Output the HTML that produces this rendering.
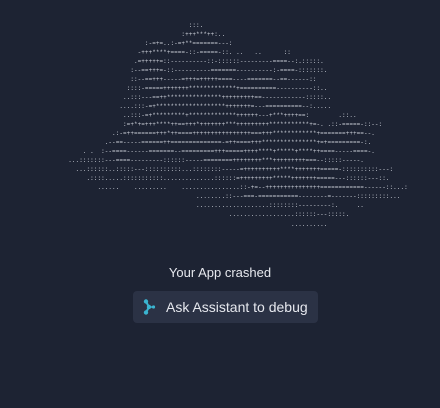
<!DOCTYPE html>
<html><head><meta charset="utf-8"><style>
html,body{margin:0;padding:0;background:#1d2333;width:440px;height:408px;overflow:hidden}
pre{position:absolute;left:50px;top:20.5px;margin:0;font-family:"Liberation Mono",monospace;font-size:6px;line-height:9.05px;color:#cdd1da;letter-spacing:0.05px}
.t{position:absolute;left:0;width:440px;top:265px;text-align:center;font-family:"Liberation Sans",sans-serif;font-size:13px;color:#e6e8ee}
.b{position:absolute;left:133px;top:291px;width:185px;height:32px;background:#2b3245;border-radius:4px;font-family:"Liberation Sans",sans-serif;font-size:14px;color:#e6e8ee}
.b span{position:absolute;left:33px;top:8px}
.b svg{position:absolute;left:10px;top:8px}
</style></head><body>
<pre>                                      :::.
                                    :+++***++:..
                          :-=+=..:-=+**=======---:
                        -+++****+====-::-=====-::. ..   ..      ::
                       .=+++++=::----------::-::::::---------====--:.:::::.
                      :--==+++=-::----------=======----------:-====-:::::::.
                      ::--==+++-----=+++=+++++====----=======--==------::
                     ::::-=====+++++++*************+==========----------::..
                    ..:::---==++***************+++++++++==------------:::::..
                   ....:::-=+*******************+++++++=---==========--:.....
                    ..:::-=+*********+*************++++++---+***++++==:        .::..
                    :=+*+=+++****++==+++*+++++++***+++++++++***********+=-. .::-=====-::--:
                 .:-=++======+++*++====++++++++++++++++===+++************+=======+++==--.
               .--==-----======++==============-=++====+++***************+=+=========-:.
         . .  :--====------=======--=========+++=====++++****+*****+****++====-----====-.
     ...:::::::---====---------::::::-----========++++++++***+++++++++===--:::::-----.
       ...::::::..:::::---::::::::::...::::::::-----=++++++++++****+++++++=====-::::::::::---:
          .::::.....:::::::::::..............::::::=+++++++++*****+++++++=====---::::::---::.
             ......    .........    ................::-+=--+++++++++++++++============------::...:
                                        ........::---===-===========--------=-------:::::::::...
                                        ....................::::::::---------:.     ..
                                                 ..................::::::---:::::.
                                                                  ..........</pre>
<div class="t">Your App crashed</div>
<div class="b"><svg width="14" height="16" viewBox="0 0 14 16"><g fill="#3bb4d0"><circle cx="3" cy="2.5" r="2.2"/><circle cx="6" cy="8" r="2.2"/><circle cx="3" cy="13.5" r="2.2"/><circle cx="10.5" cy="8" r="1.6"/><path d="M3 2.5L6 8L3 13.5" stroke="#3bb4d0" stroke-width="2" fill="none"/><path d="M6 8H10" stroke="#3bb4d0" stroke-width="1.5"/></g></svg><span>Ask Assistant to debug</span></div>
</body></html>
